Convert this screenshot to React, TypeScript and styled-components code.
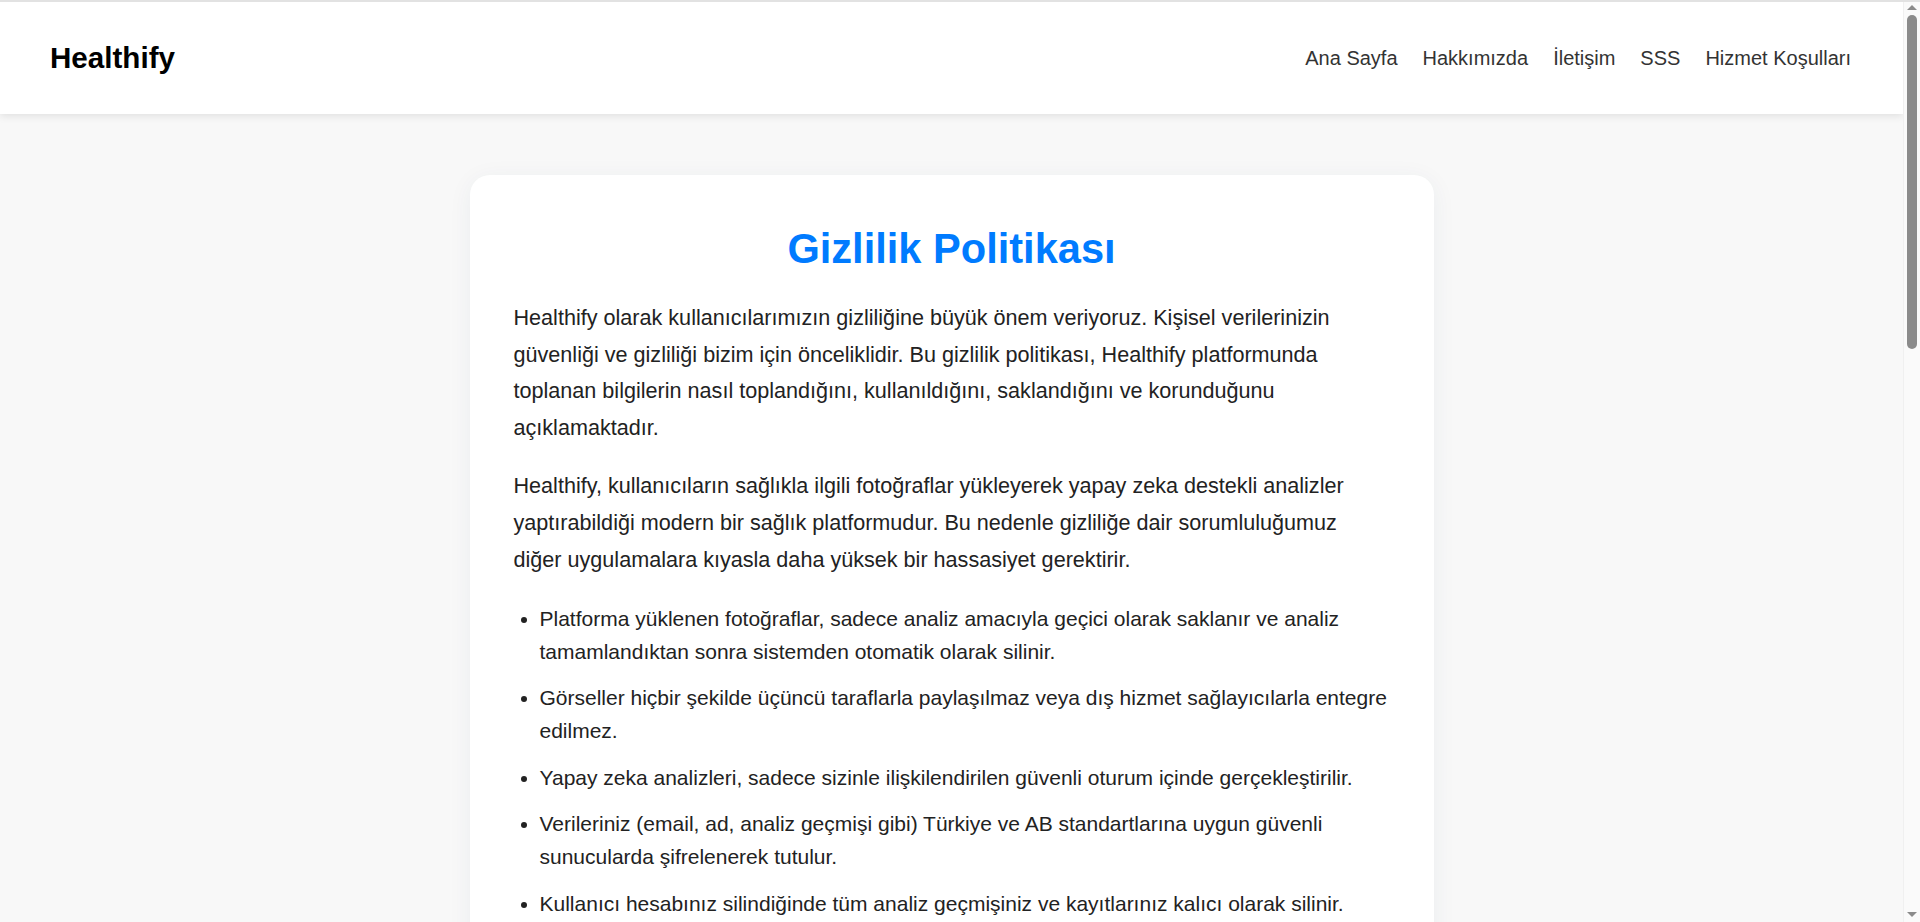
import React from 'react'
import styled, { createGlobalStyle } from 'styled-components';

const GlobalStyle = createGlobalStyle`
  html, body {
    margin: 0;
    padding: 0;
  }
  body {
    background: #f8f8f8;
    font-family: "Liberation Sans", Arial, sans-serif;
    color: #222;
    border-top: 2px solid #e2e2e2;
  }
`;

const Page = styled.div`
  margin-right: 17px;
`;

const Header = styled.header`
  display: flex;
  align-items: center;
  justify-content: space-between;
  height: 112px;
  padding: 0 52px 0 50px;
  background: #fff;
  box-shadow: 0 2px 8px rgba(0, 0, 0, 0.1);
`;

const Logo = styled.div`
  font-size: 29.6px;
  font-weight: 700;
  color: #000;
`;

const Nav = styled.nav`
  display: flex;
  gap: 25px;
`;

const NavLink = styled.a`
  font-size: 20px;
  color: #333;
  text-decoration: none;
  cursor: pointer;
`;

const Main = styled.main`
  padding: 61px 20px 80px;
`;

const Card = styled.section`
  box-sizing: border-box;
  width: 964px;
  margin: 0 auto;
  padding: 50px 44px 40px;
  background: #fff;
  border-radius: 20px;
  box-shadow: 0 4px 24px rgba(30, 60, 110, 0.06);
`;

const Title = styled.h1`
  margin: 0 0 27px;
  font-size: 41.6px;
  font-weight: 700;
  text-align: center;
  color: #007bff;
`;

const SubTitle = styled.h2`
  margin: 36px 0 16px;
  font-size: 27px;
  font-weight: 700;
  color: #007bff;
`;

const Paragraph = styled.p`
  margin: 0 0 21.6px;
  font-size: 21.6px;
  line-height: 1.7;
`;

const List = styled.ul`
  margin: 23px 0;
  padding-left: 26px;
`;

const Item = styled.li`
  margin-bottom: 13.5px;
  font-size: 21px;
  line-height: 33px;
`;

/* browser scrollbar as it appears in the capture */
const ScrollTrack = styled.div`
  position: fixed;
  top: 2px;
  right: 0;
  bottom: 0;
  width: 17px;
  box-sizing: border-box;
  display: flex;
  flex-direction: column;
  align-items: center;
  padding: 3px 0 5px;
  background: #fafafa;
  border-left: 1px solid #f0f0f0;
`;

const ScrollThumb = styled.div`
  width: 10px;
  height: 334px;
  margin-top: 5px;
  border-radius: 5px;
  background: #8b8b8b;
`;

const Spacer = styled.div`
  flex: 1;
`;

const ScrollArrow = styled.div<{ $down?: boolean }>`
  width: 0;
  height: 0;
  border-left: 5px solid transparent;
  border-right: 5px solid transparent;
  ${({ $down }) =>
    $down ? `border-top: 5px solid #8b8b8b;` : `border-bottom: 5px solid #8b8b8b;`}
`;

const navItems = ["Ana Sayfa", "Hakkımızda", "İletişim", "SSS", "Hizmet Koşulları"];

const sections = [
    {
        title: "",
        paragraphs: [
            "Healthify olarak kullanıcılarımızın gizliliğine büyük önem veriyoruz. Kişisel verilerinizin güvenliği ve gizliliği bizim için önceliklidir. Bu gizlilik politikası, Healthify platformunda toplanan bilgilerin nasıl toplandığını, kullanıldığını, saklandığını ve korunduğunu açıklamaktadır.",
            "Healthify, kullanıcıların sağlıkla ilgili fotoğraflar yükleyerek yapay zeka destekli analizler yaptırabildiği modern bir sağlık platformudur. Bu nedenle gizliliğe dair sorumluluğumuz diğer uygulamalara kıyasla daha yüksek bir hassasiyet gerektirir.",
        ],
        items: [
            "Platforma yüklenen fotoğraflar, sadece analiz amacıyla geçici olarak saklanır ve analiz tamamlandıktan sonra sistemden otomatik olarak silinir.",
            "Görseller hiçbir şekilde üçüncü taraflarla paylaşılmaz veya dış hizmet sağlayıcılarla entegre edilmez.",
            "Yapay zeka analizleri, sadece sizinle ilişkilendirilen güvenli oturum içinde gerçekleştirilir.",
            "Verileriniz (email, ad, analiz geçmişi gibi) Türkiye ve AB standartlarına uygun güvenli sunucularda şifrelenerek tutulur.",
            "Kullanıcı hesabınız silindiğinde tüm analiz geçmişiniz ve kayıtlarınız kalıcı olarak silinir.",
        ],
    },
    {
        title: "Toplanan Bilgiler",
        paragraphs: [
            "Hizmetlerimizi sunabilmek için yalnızca gerekli olan bilgileri topluyoruz. Bu bilgiler hesap oluşturma, analiz talebi ve destek süreçlerinde sizin tarafınızdan sağlanır.",
        ],
        items: [
            "Ad, soyad ve e-posta adresi gibi temel hesap bilgileri.",
            "Analiz için yüklediğiniz fotoğraflar ve bunlara ait analiz sonuçları.",
            "Platform kullanımına ilişkin anonim istatistiksel veriler.",
        ],
    },
    {
        title: "Çerezler",
        paragraphs: [
            "Healthify, oturumunuzu güvenli bir şekilde sürdürebilmek ve kullanıcı deneyimini iyileştirmek amacıyla zorunlu çerezler kullanır. Reklam veya izleme amaçlı üçüncü taraf çerezleri kullanılmaz.",
        ],
        items: [],
    },
    {
        title: "Haklarınız",
        paragraphs: [
            "KVKK ve GDPR kapsamında kişisel verilerinize erişme, düzeltilmesini veya silinmesini talep etme ve işlenmesine itiraz etme haklarına sahipsiniz.",
        ],
        items: [
            "Verilerinizin bir kopyasını talep edebilirsiniz.",
            "Hesabınızı dilediğiniz zaman kalıcı olarak silebilirsiniz.",
        ],
    },
    {
        title: "İletişim",
        paragraphs: [
            "Gizlilik politikamız hakkında sorularınız için iletişim sayfası üzerinden veya destek@healthify.com adresinden bize ulaşabilirsiniz.",
        ],
        items: [],
    },
];

function App() {
    return (
        <>
            <GlobalStyle />
            <Page>
                <Header>
                    <Logo>Healthify</Logo>
                    <Nav>
                        {navItems.map((item, index) => (
                            <NavLink key={index}>{item}</NavLink>
                        ))}
                    </Nav>
                </Header>
                <Main>
                    <Card>
                        <Title>Gizlilik Politikası</Title>
                        {sections.map((section, index) => (
                            <div key={index}>
                                {section.title && <SubTitle>{section.title}</SubTitle>}
                                {section.paragraphs.map((text, i) => (
                                    <Paragraph key={i}>{text}</Paragraph>
                                ))}
                                {section.items.length > 0 && (
                                    <List>
                                        {section.items.map((text, i) => (
                                            <Item key={i}>{text}</Item>
                                        ))}
                                    </List>
                                )}
                            </div>
                        ))}
                    </Card>
                </Main>
            </Page>
            <ScrollTrack>
                <ScrollArrow />
                <ScrollThumb />
                <Spacer />
                <ScrollArrow $down />
            </ScrollTrack>
        </>
    )
}

export default App
